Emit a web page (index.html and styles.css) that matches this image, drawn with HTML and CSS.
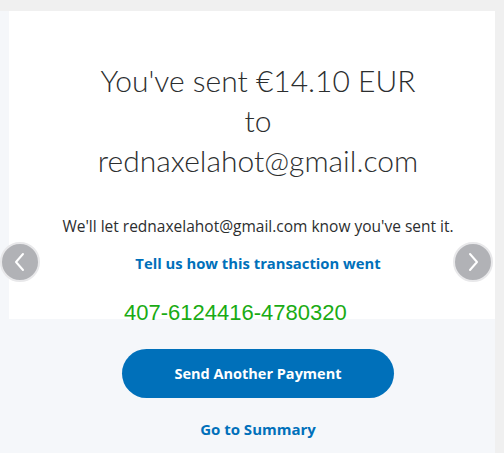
FILE: index.html
```html
<!DOCTYPE html>
<html>
<head>
<meta charset="utf-8">
<link rel="stylesheet" href="styles.css">
</head>
<body>
<div class="page">
  <div class="main">
    <div class="card">
      <h1 class="title">You've sent €14.10 EUR<br>to<br>rednaxelahot@gmail.com</h1>
      <p class="note">We'll let rednaxelahot@gmail.com know you've sent it.</p>
      <a class="feedback">Tell us how this transaction went</a>
      <div class="txid">407-6124416-4780320</div>
    </div>
    <div class="actions">
      <button class="primary">Send Another Payment</button>
      <a class="summary">Go to Summary</a>
    </div>
    <div class="arrow left"><svg width="16" height="20" viewBox="0 0 16 20"><path d="M11 2 L4 10 L11 18" fill="none" stroke="#fff" stroke-width="2" stroke-linecap="round" stroke-linejoin="round"/></svg></div>
    <div class="arrow right"><svg width="16" height="20" viewBox="0 0 16 20"><path d="M5 2 L12 10 L5 18" fill="none" stroke="#fff" stroke-width="2" stroke-linecap="round" stroke-linejoin="round"/></svg></div>
  </div>
  <div class="scroll"></div>
</div>
</body>
</html>
```
FILE: styles.css
```css
html, body {
  margin: 0;
  padding: 0;
  background: #f0f0f0;
  overflow: hidden;
}
.page {
  display: flex;
  width: 504px;
  height: 453px;
}
.main {
  position: relative;
  width: 495px;
  margin-top: 11px;
  background: #f5f7fa;
  display: flex;
  flex-direction: column;
}
.scroll {
  flex: 1;
  background: #f0f0f0;
}
.card {
  margin-left: 9px;
  height: 308px;
  background: #fff;
  box-sizing: border-box;
  padding: 49px 0 0 12px;
  display: flex;
  flex-direction: column;
  align-items: center;
  font-family: "Open Sans", sans-serif;
}
.title {
  margin: 0;
  font-family: Lato, sans-serif;
  font-weight: 300;
  font-size: 30px;
  line-height: 40px;
  color: #2c2e2f;
  text-align: center;
}
.note {
  margin: 36px 0 0;
  font-size: 15.5px;
  line-height: 20px;
  color: #2c2e2f;
}
.feedback {
  margin-top: 17px;
  font-size: 14.8px;
  line-height: 20px;
  font-weight: 700;
  color: #0070ba;
}
.txid {
  align-self: flex-start;
  margin: 28px 0 0 103px;
  font-family: "Liberation Sans", Arial, sans-serif;
  font-size: 22px;
  line-height: 24px;
  color: #1aab14;
}
.actions {
  display: flex;
  flex-direction: column;
  align-items: center;
  padding-left: 21px;
  font-family: "Open Sans", sans-serif;
}
.primary {
  margin-top: 30px;
  width: 272px;
  height: 49px;
  border: none;
  border-radius: 25px;
  background: #0070ba;
  color: #fff;
  font-family: "Open Sans", sans-serif;
  font-weight: 700;
  font-size: 14.5px;
}
.summary {
  margin-top: 21px;
  font-size: 15px;
  line-height: 20px;
  font-weight: 700;
  color: #0070ba;
}
.arrow {
  position: absolute;
  top: 231px;
  width: 36px;
  height: 36px;
  border-radius: 50%;
  background: #b1b2b6;
  border: 2px solid #e8e8ea;
  display: flex;
  align-items: center;
  justify-content: center;
}
.arrow.left { left: 0; }
.arrow.right { left: 453px; }
```
